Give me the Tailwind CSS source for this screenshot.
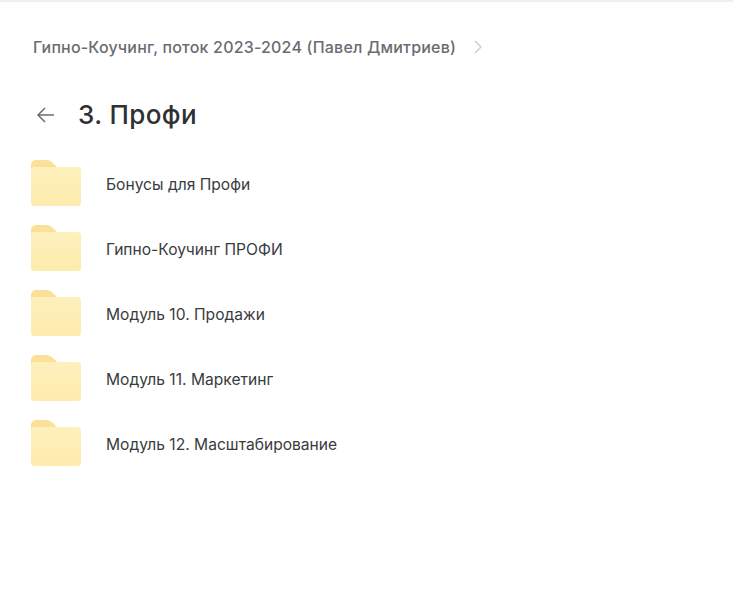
<!DOCTYPE html>
<html lang="ru">
<head>
    <meta charset="UTF-8">
    <title>3. Профи</title>
    <script src="https://cdn.jsdelivr.net/npm/@tailwindcss/browser@4"></script>
</head>
<body class="bg-white font-['Inter','Noto_Sans',sans-serif] overflow-hidden">
    <svg width="0" height="0" class="absolute">
        <defs>
            <linearGradient id="front" x1="0" y1="0" x2="0" y2="1">
                <stop offset="0" stop-color="#fdf0bc"/>
                <stop offset="1" stop-color="#fdecae"/>
            </linearGradient>
            <symbol id="folder" viewBox="0 0 50 46">
                <path d="M0 5a5 5 0 0 1 5-5h10c4 0 6 2 9 5l3 3H46a4 4 0 0 1 4 4v20H0z" fill="#fbe09a"/>
                <rect y="7" width="50" height="39" rx="3.500" fill="url(#front)"/>
            </symbol>
        </defs>
    </svg>
    <div class="h-[612px] border-t-2 border-[#efefef]">
        <div class="flex items-center pl-[33px] pt-[33px] h-[57px]">
            <span class="text-[16px] leading-[22px] font-medium text-[#6b6b70] tracking-[0.19px]">Гипно-Коучинг, поток 2023-2024 (Павел Дмитриев)</span>
            <svg class="ml-[17px]" width="10" height="16" viewBox="0 0 10 16" fill="none"><path d="M2 2l6 6-6 6" stroke="#cfcfcf" stroke-width="1.500"/></svg>
        </div>

        <div class="flex items-center pl-[36px] mt-[34px] h-[44px]">
            <svg width="20" height="20" viewBox="0 0 20 20" fill="none"><path d="M18 10H2M9 3l-7 7 7 7" stroke="#6e6e6e" stroke-width="1.500"/></svg>
            <h1 class="ml-[22px] text-[26px] leading-[32px] font-medium text-[#2f3033] tracking-[0.4px]">3. Профи</h1>
        </div>

        <div class="mt-[13px] flex flex-col">
            <div class="flex items-center h-[65px] pl-[31px]">
                <svg width="50" height="46"><use href="#folder"/></svg>
                <span class="ml-[25px] pt-[5px] text-[15.6px] leading-[20px] text-[#3a3b40]">Бонусы для Профи</span>
            </div>
            <div class="flex items-center h-[65px] pl-[31px]">
                <svg width="50" height="46"><use href="#folder"/></svg>
                <span class="ml-[25px] pt-[5px] text-[15.6px] leading-[20px] text-[#3a3b40]">Гипно-Коучинг ПРОФИ</span>
            </div>
            <div class="flex items-center h-[65px] pl-[31px]">
                <svg width="50" height="46"><use href="#folder"/></svg>
                <span class="ml-[25px] pt-[5px] text-[15.6px] leading-[20px] text-[#3a3b40]">Модуль 10. Продажи</span>
            </div>
            <div class="flex items-center h-[65px] pl-[31px]">
                <svg width="50" height="46"><use href="#folder"/></svg>
                <span class="ml-[25px] pt-[5px] text-[15.6px] leading-[20px] text-[#3a3b40]">Модуль 11. Маркетинг</span>
            </div>
            <div class="flex items-center h-[65px] pl-[31px]">
                <svg width="50" height="46"><use href="#folder"/></svg>
                <span class="ml-[25px] pt-[5px] text-[15.6px] leading-[20px] text-[#3a3b40]">Модуль 12. Масштабирование</span>
            </div>
        </div>
    </div>
</body>
</html>
